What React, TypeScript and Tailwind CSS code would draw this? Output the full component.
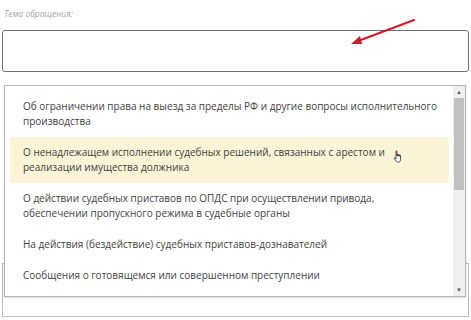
import React from 'react';

const items: string[][] = [
  ['Об ограничении права на выезд за пределы РФ и другие вопросы исполнительного', 'производства'],
  ['О ненадлежащем исполнении судебных решений, связанных с арестом и', 'реализации имущества должника'],
  ['О действии судебных приставов по ОПДС при осуществлении привода,', 'обеспечении пропускного режима в судебные органы'],
  ['На действия (бездействие) судебных приставов-дознавателей'],
  ['Сообщения о готовящемся или совершенном преступлении'],
];

const HandCursor = () => (
  <svg width="12" height="14" viewBox="0 0 12 14" className="absolute left-[393px] top-[150px]">
    <path
      d="M3 1.2c0-.6.9-.6.9 0V6h.3V4.6c0-.6.9-.6.9 0V6h.3V5c0-.6.9-.6.9 0v1.2h.3v-.7c0-.6.9-.6.9 0v4.3c0 1.2-.7 2.2-1.8 2.2H4.6c-.7 0-1.1-.4-1.5-.9L1.2 8.4c-.4-.5.3-1.1.8-.6L3 8.8V1.2z"
      fill="#fff"
      stroke="#222"
      strokeWidth="0.8"
      strokeLinejoin="round"
    />
  </svg>
);

const App = () => {
  return (
    <div className="relative w-[471px] h-[320px] overflow-hidden bg-white font-['Open_Sans',sans-serif]">
      <div className="flex flex-col px-[2px] pt-[7px]">
        <p className="pl-[2px] text-[8.5px] italic leading-[14px] text-[#a3a3a3]">Тема обращения:</p>
        <div className="mt-[9px] h-[42px] w-[467px] rounded-[3px] border-[1.5px] border-[#6f6f6f]" />
        <div className="mt-[191px] h-[54px] w-[467px] border border-[#bdbdbd]" />
      </div>

      {/* red arrow */}
      <svg width="471" height="60" className="absolute left-0 top-0">
        <line x1="414" y1="20" x2="358" y2="41" stroke="#d0192a" strokeWidth="2" strokeLinecap="round" />
        <path d="M351 44 L360 36 L362 44 Z" fill="#d0192a" />
      </svg>

      {/* opened list */}
      <div className="absolute left-[4px] top-[85px] flex h-[212px] w-[462px] border border-[#b5b5b5] bg-white shadow-[0_1px_2px_rgba(0,0,0,0.15)]">
        <ul className="min-w-0 flex-1 overflow-hidden pl-[5px] pr-[4px] pt-[5px] text-[10px] leading-[15px] text-[#3f3f3f]">
          {items.map((lines, i) => (
            <li
              key={i}
              className={
                i === 1
                  ? 'rounded-[2px] bg-[#fbf4d7] px-[13px] py-[8px]'
                  : 'px-[13px] py-[8px]'
              }
            >
              {lines.map((l, j) => (
                <div key={j} className="whitespace-nowrap">{l}</div>
              ))}
            </li>
          ))}
        </ul>
        <div className="flex w-[12px] shrink-0 flex-col bg-[#efefef]">
          <div className="flex h-[12px] items-center justify-center text-[6px] leading-none text-[#666]">▲</div>
          <div className="mx-[1px] h-[92px] bg-[#c1c1c1]" />
          <div className="flex-1" />
          <div className="flex h-[12px] items-center justify-center text-[6px] leading-none text-[#555]">▼</div>
        </div>
      </div>

      <HandCursor />
    </div>
  );
};

export default App;
